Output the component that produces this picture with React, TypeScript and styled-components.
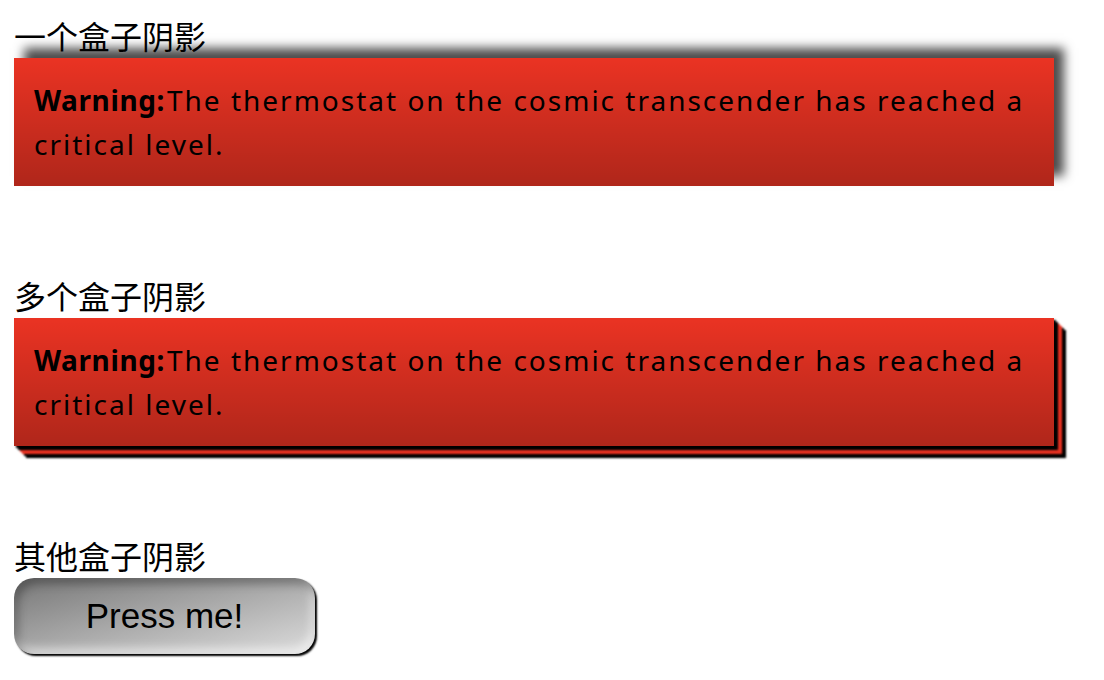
import React from "react";
import styled, { createGlobalStyle, css } from "styled-components";

const GlobalStyle = createGlobalStyle`
  html, body {
    margin: 0;
    padding: 0;
    background: #ffffff;
  }
  body {
    font-family: "Noto Sans", "Noto Sans CJK SC", sans-serif;
    color: #000;
  }
`;

const Page = styled.div`
  display: flex;
  flex-direction: column;
  gap: 86px;
  padding: 12px 14px;
`;

const Section = styled.section`
  display: flex;
  flex-direction: column;
  align-items: flex-start;
`;

const Heading = styled.div`
  font-family: "Noto Sans CJK SC", sans-serif;
  font-size: 32px;
  line-height: 46px;
  height: 46px;
  color: #000;
`;

const RED = "#ea3323";

type ShadowKind = "simple" | "multiple";

const shadows: Record<ShadowKind, ReturnType<typeof css>> = {
  simple: css`
    box-shadow: 10px -10px 10px rgba(0, 0, 0, 0.7);
  `,
  multiple: css`
    box-shadow: 2px 2px 2px #000, 4px 4px 2px #000, 6px 6px 2px ${RED},
      8px 8px 2px ${RED}, 10px 10px 2px #000, 12px 12px 2px #000;
  `,
};

const Article = styled.article<{ $shadow: ShadowKind }>`
  box-sizing: border-box;
  width: 1040px;
  padding: 20px;
  font-family: "Noto Sans", sans-serif;
  font-size: 28px;
  line-height: 44px;
  letter-spacing: 2px;
  color: #000;
  background-color: ${RED};
  background-image: linear-gradient(
    to bottom,
    rgba(0, 0, 0, 0),
    rgba(0, 0, 0, 0.25)
  );
  ${(p) => shadows[p.$shadow]}
`;

const Strong = styled.strong`
  font-weight: 700;
  letter-spacing: 0.6px;
  margin-right: 2px;
`;

const PressButton = styled.button`
  box-sizing: border-box;
  width: 301px;
  height: 76px;
  padding: 0;
  border: none;
  border-radius: 20px;
  font-family: "Liberation Sans", Arial, sans-serif;
  font-size: 35px;
  color: #000;
  background-image: linear-gradient(to bottom right, #777, #ddd);
  box-shadow: 2px 2px 2px #000, inset 4px 6px 10px rgba(0, 0, 0, 0.3),
    inset -4px -6px 10px rgba(255, 255, 255, 0.5);
  cursor: pointer;
`;

const Warning: React.FC<{ kind: ShadowKind }> = ({ kind }) => (
  <Article $shadow={kind}>
    <Strong>Warning:</Strong>The thermostat on the cosmic transcender has
    reached a critical level.
  </Article>
);

export default function App() {
  return (
    <>
      <GlobalStyle />
      <Page>
        <Section>
          <Heading>一个盒子阴影</Heading>
          <Warning kind="simple" />
        </Section>
        <Section>
          <Heading>多个盒子阴影</Heading>
          <Warning kind="multiple" />
        </Section>
        <Section>
          <Heading>其他盒子阴影</Heading>
          <PressButton>Press me!</PressButton>
        </Section>
      </Page>
    </>
  );
}
